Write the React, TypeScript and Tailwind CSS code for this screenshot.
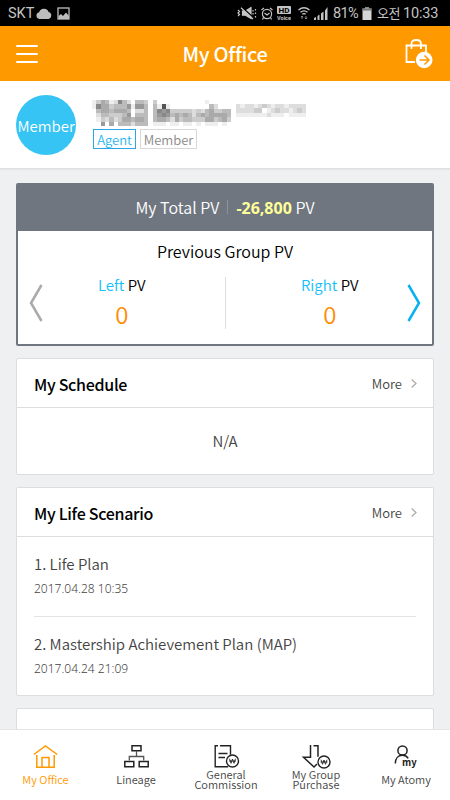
import React from "react";

const nameMosaic = [
    "ecabed8bdfbbcfcfffffffffffefffff",
    "e8aacbbb9e99bfbe5efffffffffbdfff",
    "fbaabaaabfddbfb898cccccdcdbaccbb",
    "fdbbcccb9fbbbfb989bababdbabaaaab",
    "fecdbdcaabaabfbaabdacbbcccaacbac",
    "ff9fafbbbdbbbfeeefeefeefefeeefef",
]

const idMosaic = [
    "deddedcdeddedddd",
    "ddddccfedcddedcd",
    "eeeeeeedeeefeeee",
]

const Mosaic: React.FC<{ rows: string[]; className: string }> = ({ rows, className }) => (
    <svg className={className} viewBox={`0 0 ${rows[0].length} ${rows.length}`} preserveAspectRatio="none" shapeRendering="crispEdges">
        {rows.map((row, y) =>
            row.split("").map((c, x) => <rect key={`${x}-${y}`} x={x} y={y} width="1.02" height="1.02" fill={`#${c}${c}${c}`} />)
        )}
    </svg>
)

const StatusBar: React.FC = () => (
    <div className="flex h-[26px] items-center justify-between bg-black pl-2 pr-3 font-[Roboto,sans-serif] font-normal text-[#c4c4c4]">
        <div className="flex items-center">
            <span className="w-[26px] text-[14.5px] leading-[26px] pt-px">SKT</span>
            <svg className="ml-[2px] h-[11px] w-[16px]" viewBox="0 0 16 11" fill="#bdbdbd">
                <path d="M3.5 11a3.4 3.4 0 0 1-.4-6.7A5 5 0 0 1 12.6 4a3.6 3.6 0 0 1-.2 7z" />
            </svg>
            <svg className="ml-[5px] h-[13px] w-[13px]" viewBox="0 0 13 13">
                <rect x="1" y="1" width="11" height="11" fill="none" stroke="#bdbdbd" strokeWidth="1.3" />
                <path d="M1.500 9 4 7 6 9l3-3.500 3 3.500V12H1.500z" fill="#bdbdbd" />
            </svg>
        </div>
        <div className="flex items-center">
            <svg className="h-[14px] w-[20px]" viewBox="0 0 20 14" fill="none" stroke="#c4c4c4" strokeWidth="1.2">
                <path d="M5.500 5h3L14 1.500v11L8.500 9.200h-3z" fill="#c4c4c4" />
                <path d="M4.500 1 17 12" stroke="#000" strokeWidth="1.500" />
                <path d="M4 1.800 16 13M1 4l1.500 1.500L1 7l1.500 1.500L1 10M16 4v1.500M16 7v1.500M18.500 3v1.500M18.500 6.500V8M18.500 10v1.500" />
            </svg>
            <svg className="ml-[4px] h-[13px] w-[12px]" viewBox="0 0 12 13" fill="none" stroke="#c4c4c4" strokeWidth="1.2">
                <circle cx="6" cy="7" r="4.600" />
                <path d="m.5 3 2.500-2M11.500 3 9 1M3.500 6 6 8l2.500-2M2.500 10.500 1.500 12.500M9.500 10.500l1 2" />
            </svg>
            <svg className="ml-[4px] h-[14px] w-[14px]" viewBox="0 0 14 14" fill="#c4c4c4">
                <rect width="14" height="8" rx="1" />
                <text x="1.500" y="6.700" fontSize="7" fontWeight="700" fill="#000" textLength="11" lengthAdjust="spacingAndGlyphs">HD</text>
                <text x="0" y="13.500" fontSize="5.500" fontWeight="700" textLength="14">Voice</text>
            </svg>
            <svg className="ml-[6px] h-[14px] w-[14px]" viewBox="0 0 14 14" fill="none" stroke="#c4c4c4" strokeWidth="1.400">
                <path d="M1.500 4Q7-.5 12.500 4M3.500 6.200Q7 3.500 10.500 6.200M5.300 8.200Q7 7 8.700 8.200" />
                <path d="M5 13v-3M3.800 11.200 5 10l1.200 1.200M9 10v3M7.800 11.800 9 13l1.200-1.200" strokeWidth="1" stroke="#8a8a8a" />
            </svg>
            <svg className="ml-[3px] h-[13px] w-[14px]" viewBox="0 0 14 13" fill="#c4c4c4">
                <path d="M0 13v-2l2-1v3zM3.500 13V9l2-1.500V13zM7 13V6.500L9.500 4.500V13zM11 13V3.500L13.500 0v13z" />
            </svg>
            <span className="ml-[5px] w-[26px] text-[14.5px] leading-[26px] tracking-[-0.6px] pt-px">81%</span>
            <svg className="ml-[3px] h-[13px] w-[10px]" viewBox="0 0 10 13">
                <path d="M3 0h4v2H3z" fill="#8a8a8a" />
                <rect x=".5" y="1.500" width="9" height="11.500" fill="#d5d5d5" />
                <rect x=".5" y="1.500" width="9" height="2" fill="#777" />
            </svg>
            <span className="ml-[5px] w-[23px] whitespace-nowrap font-['Noto_Sans_CJK_KR',sans-serif] text-[13px] leading-[26px] tracking-[-0.5px]">오전</span>
            <span className="ml-[3px] w-[35px] text-[14.5px] leading-[26px] tracking-[-0.2px] pt-px">10:33</span>
        </div>
    </div>
)

const SectionHead: React.FC<{ title: string }> = ({ title }) => (
    <div className="flex h-[49px] items-center justify-between border-b border-[#dcdddf] pl-[17px] pr-[16px]">
        <h2 className="pt-px text-[16px] font-medium leading-6 tracking-[-0.3px] text-black">{title}</h2>
        <button className="flex items-center gap-[9px] pt-px text-[13px] leading-5 text-[#444]">
            More
            <svg className="h-[9px] w-[6px]" viewBox="0 0 6 9" fill="none" stroke="#aaa" strokeWidth="1.200">
                <path d="m.7.5 4.300 4-4.300 4" />
            </svg>
        </button>
    </div>
)

const plans = [
    { title: "1. Life Plan", date: "2017.04.28 10:35" },
    { title: "2. Mastership Achievement Plan (MAP)", date: "2017.04.24 21:09" },
]

const WonBadge: React.FC<{ cx: number; cy: number }> = ({ cx, cy }) => (
    <>
        <circle cx={cx} cy={cy} r="6" fill="#fff" strokeWidth="1.400" />
        <path d={`M${cx - 3} ${cy - 2.3}l1.500 4.600L${cx} ${cy - 2}l1.500 4.300L${cx + 3} ${cy - 2.3}M${cx - 3.5} ${cy}h7`} strokeWidth=".9" />
    </>
)

const tabs = [
    {
        label: ["My Office"],
        icon: <path d="M.8 9.500 12.500 1l11.700 8.500M3.800 10v12.300h17.400V10M9 22.300V12.500h7v9.800" strokeWidth="1.500" />,
    },
    {
        label: ["Lineage"],
        icon: (
            <>
                <path d="M8 .8h9v5H8zM.8 16.500h9v5.200h-9zM15.200 16.500h9v5.200h-9z" strokeWidth="1.500" />
                <path d="M12.500 6v5.500M5.300 15.500v-4h14.400v4" stroke="#555" strokeWidth="1.300" />
            </>
        ),
    },
    {
        label: ["General", "Commission"],
        icon: (
            <>
                <path d="M4 .8H1.200v21h13M6 .8h10.500v9M4.500 8.500h9M4.500 12.500h6.500" strokeWidth="1.400" />
                <WonBadge cx={18.5} cy={16} />
            </>
        ),
    },
    {
        label: ["My Group", "Purchase"],
        icon: (
            <>
                <path d="M6.500 0v12.200H-.5L10 22l3-3M9.500.8h4.500v11" strokeWidth="1.500" />
                <WonBadge cx={20} cy={17} />
            </>
        ),
    },
    {
        label: ["My Atomy"],
        icon: (
            <>
                <circle cx="8.500" cy="5.500" r="4.600" strokeWidth="1.500" />
                <path d="M1.300 18.500c0-5 3-8.200 7.200-8.200 2.500 0 4.500 1 5.700 3" strokeWidth="1.500" />
                <text x="8" y="20.500" fontSize="9.500" fontWeight="700" fill="#222" stroke="none">my</text>
            </>
        ),
    },
]

const App: React.FC = () => {
    return (
        <div className="flex h-[800px] w-[450px] flex-col overflow-hidden bg-[#eff0f2] font-['Noto_Sans_CJK_KR','Noto_Sans',sans-serif] font-[350]">
            <StatusBar />
            <header className="flex h-[55px] shrink-0 items-center justify-between bg-[#ff9900] pl-4 pr-[16px]">
                <div className="flex w-[30px] flex-col gap-[6px]">
                    <i className="h-[2px] w-[22px] rounded bg-white"></i>
                    <i className="h-[2px] w-[22px] rounded bg-white"></i>
                    <i className="h-[2px] w-[22px] rounded bg-white"></i>
                </div>
                <h1 className="text-[20px] font-medium leading-7 tracking-[-0.3px] text-white">My Office</h1>
                <svg className="h-[32px] w-[30px]" viewBox="0 0 30 32" fill="none" stroke="#fff" strokeWidth="1.800">
                    <path d="M11 24H2.500V7.500H22V14M7.500 11V5.500q0-3.500 4.700-3.500t4.700 3.500V11" />
                    <circle cx="20.200" cy="22" r="8.300" fill="#fff" stroke="none" />
                    <path d="M15.500 22H24M20.500 17.500l4.500 4.500-4.500 4.500" stroke="#ff9900" strokeWidth="1.500" />
                </svg>
            </header>

            <section className="flex h-[88px] shrink-0 border-b border-[#dfe0e2] bg-white pl-[16px] pt-[14px] shadow-xs">
                <div className="flex h-[60px] w-[60px] items-center justify-center rounded-full bg-[#35c4f3] pt-px text-[15px] leading-6 text-white">Member</div>
                <div className="ml-[16px] pt-[5px]">
                    <div className="flex items-start">
                        <Mosaic rows={nameMosaic} className="h-[26px] w-[139px]" />
                        <Mosaic rows={idMosaic} className="ml-[5px] mt-[4px] h-[13px] w-[70px]" />
                    </div>
                    <div className="ml-px mt-[3px] flex gap-[4px] text-[13px] leading-[19px]">
                        <span className="flex h-[20px] w-[43px] justify-center border border-[#2aa7e4] text-[#1fb6f0]">Agent</span>
                        <span className="flex h-[20px] w-[57px] justify-center border border-[#d8d8d8] text-[#888]">Member</span>
                    </div>
                </div>
            </section>

            <main className="flex h-[560px] flex-col gap-3 overflow-hidden px-4 pt-[14px]">
                <section className="h-[163px] shrink-0 rounded-[2px] border-2 border-[#6f7680] bg-white">
                    <div className="flex h-[46px] items-center justify-center bg-[#6f7680] pb-[2px] text-[16px] text-white">
                        <span>My Total PV</span>
                        <i className="mx-[8px] h-[14px] w-px bg-[#8d939b]"></i>
                        <span><b className="font-['Noto_Sans',sans-serif] font-bold text-[#ffff99]">-26,800</b> PV</span>
                    </div>
                    <h3 className="pt-[8px] text-center text-[16px] leading-6 text-black">Previous Group PV</h3>
                    <div className="mt-[14px] flex h-[52px] items-center justify-between px-[11px]">
                        <svg className="h-[38px] w-[14px]" viewBox="0 0 14 38" fill="none" stroke="#aaa" strokeWidth="2.500">
                            <path d="M12.500 1 2 19l10.500 18" />
                        </svg>
                        <div className="flex h-full w-[168px] flex-col items-center pr-[24px]">
                            <p className="-mt-[4px] text-[15px] leading-6 text-black"><span className="text-[#12c0fa]">Left</span> PV</p>
                            <p className="mt-[1px] text-[24px] leading-[32px] text-[#ff8c00]">0</p>
                        </div>
                        <i className="h-full w-px bg-[#ddd]"></i>
                        <div className="flex h-full w-[168px] flex-col items-center pl-[27px]">
                            <p className="-mt-[4px] text-[15px] leading-6 text-black"><span className="text-[#12c0fa]">Right</span> PV</p>
                            <p className="mt-[1px] text-[24px] leading-[32px] text-[#ff8c00]">0</p>
                        </div>
                        <svg className="h-[38px] w-[14px]" viewBox="0 0 14 38" fill="none" stroke="#08b1f1" strokeWidth="2.500">
                            <path d="M1.500 1 12 19 1.500 37" />
                        </svg>
                    </div>
                </section>

                <section className="h-[117px] shrink-0 rounded-[2px] border border-[#dcdddf] bg-white">
                    <SectionHead title="My Schedule" />
                    <div className="flex h-[66px] items-center justify-center text-[15px] text-[#444]">N/A</div>
                </section>

                <section className="h-[209px] shrink-0 rounded-[2px] border border-[#dcdddf] bg-white">
                    <SectionHead title="My Life Scenario" />
                    <ul className="mx-[17px] divide-y divide-[#e4e4e4]">
                        {plans.map((plan) => (
                            <li key={plan.date} className="h-[80px] pt-[15px] text-[#444]">
                                <p className="text-[15px] leading-6">{plan.title}</p>
                                <p className="mt-[3px] font-['Noto_Sans',sans-serif] text-[12px] leading-5">{plan.date}</p>
                            </li>
                        ))}
                    </ul>
                </section>

                <section className="h-[60px] shrink-0 rounded-[2px] border border-[#dcdddf] bg-white"></section>
            </main>

            <nav className="grid h-[71px] shrink-0 grid-cols-5 border-t border-[#e4e5e7] bg-white">
                {tabs.map((tab, i) => (
                    <button key={tab.label[0]} className={i === 0 ? "flex flex-col items-center pt-[15px] pl-px text-[#ff9900]" : "flex flex-col items-center pt-[15px] pl-[2px] text-[#444]"}>
                        <svg className="h-[23px] w-[25px] shrink-0 overflow-visible" viewBox="0 0 25 23" fill="none" stroke={i === 0 ? "#ff9900" : "#222"}>
                            {tab.icon}
                        </svg>
                        <span className="-mt-px flex h-[24px] flex-col justify-center text-[11px] leading-[10px]">
                            {tab.label.map((line) => <span key={line}>{line}</span>)}
                        </span>
                    </button>
                ))}
            </nav>
        </div>
    );
}

export default App;
